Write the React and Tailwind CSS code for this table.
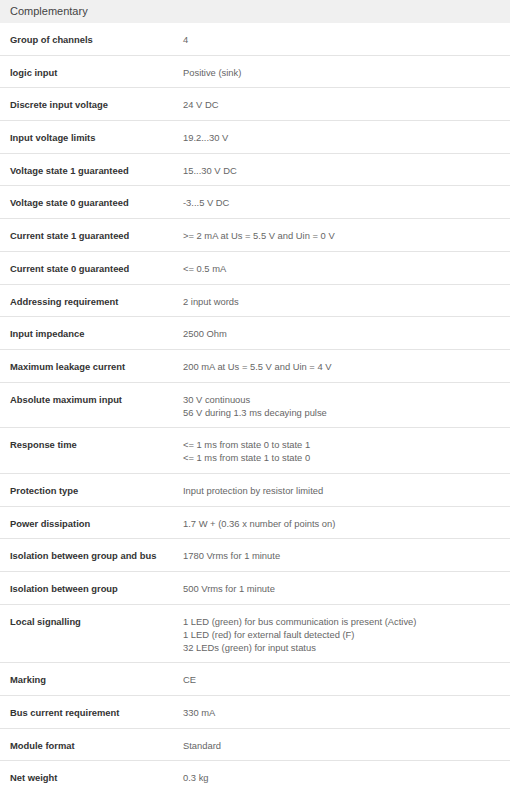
const specs = [
  ["Group of channels", ["4"]],
  ["logic input", ["Positive (sink)"]],
  ["Discrete input voltage", ["24 V DC"]],
  ["Input voltage limits", ["19.2...30 V"]],
  ["Voltage state 1 guaranteed", ["15...30 V DC"]],
  ["Voltage state 0 guaranteed", ["-3...5 V DC"]],
  ["Current state 1 guaranteed", [">= 2 mA at Us = 5.5 V and Uin = 0 V"]],
  ["Current state 0 guaranteed", ["<= 0.5 mA"]],
  ["Addressing requirement", ["2 input words"]],
  ["Input impedance", ["2500 Ohm"]],
  ["Maximum leakage current", ["200 mA at Us = 5.5 V and Uin = 4 V"]],
  ["Absolute maximum input", ["30 V continuous", "56 V during 1.3 ms decaying pulse"]],
  ["Response time", ["<= 1 ms from state 0 to state 1", "<= 1 ms from state 1 to state 0"]],
  ["Protection type", ["Input protection by resistor limited"]],
  ["Power dissipation", ["1.7 W + (0.36 x number of points on)"]],
  ["Isolation between group and bus", ["1780 Vrms for 1 minute"]],
  ["Isolation between group", ["500 Vrms for 1 minute"]],
  [
    "Local signalling",
    [
      "1 LED (green) for bus communication is present (Active)",
      "1 LED (red) for external fault detected (F)",
      "32 LEDs (green) for input status",
    ],
  ],
  ["Marking", ["CE"]],
  ["Bus current requirement", ["330 mA"]],
  ["Module format", ["Standard"]],
  ["Net weight", ["0.3 kg"]],
];

export default function App() {
  return (
    <div className="w-[510px] bg-white font-['Liberation_Sans',Arial,sans-serif]">
      <div className="flex h-[23px] items-center bg-[#f0f0f0] px-[10px] text-[11px] text-[#444]">
        Complementary
      </div>
      <div>
        {specs.map(([label, values]) => (
          <div key={label} className="flex border-b border-[#e4e4e4] pt-[10px] pb-[8.7px] text-[9.4px] leading-[13px]">
            <div className="w-[183px] shrink-0 pl-[10px] font-bold text-[#333]">{label}</div>
            <div className="text-[#666]">
              {values.map((v) => (
                <div key={v}>{v}</div>
              ))}
            </div>
          </div>
        ))}
      </div>
    </div>
  );
}
